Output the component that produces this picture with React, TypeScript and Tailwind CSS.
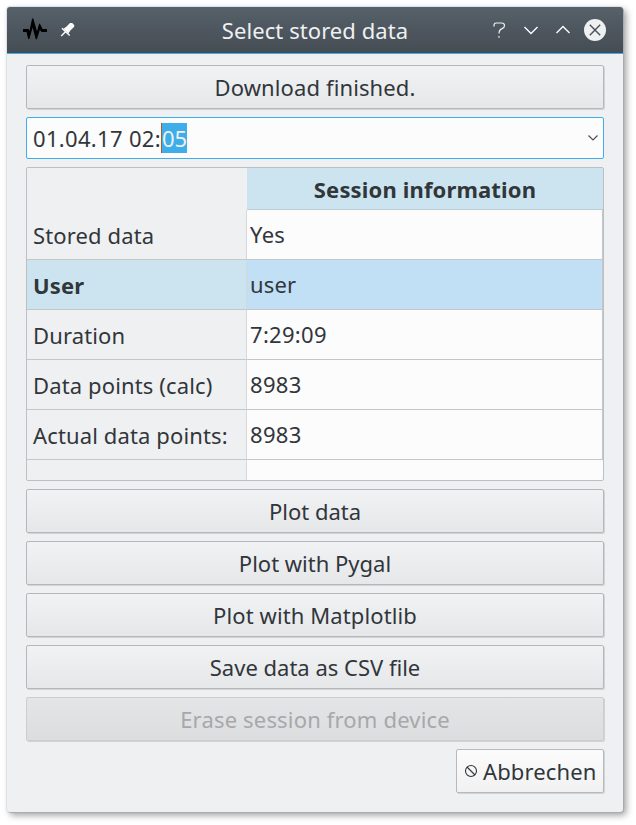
import React from "react";

const rows = [
  { label: "Stored data", value: "Yes" },
  { label: "User", value: "user", active: true },
  { label: "Duration", value: "7:29:09" },
  { label: "Data points (calc)", value: "8983" },
  { label: "Actual data points:", value: "8983" },
];

function PushButton({
  children,
  disabled,
  tracking = "",
}: {
  children: React.ReactNode;
  disabled?: boolean;
  tracking?: string;
}) {
  return (
    <button
      disabled={disabled}
      className={
        "flex h-11 w-full shrink-0 items-center justify-center rounded-[2px] border bg-linear-to-b pb-px shadow-[1px_1px_0_#d2d3d5] " +
        tracking +
        (disabled
          ? " border-[#cbcdcf] from-[#e4e5e7] to-[#dcdddf] text-[#a6a8aa]"
          : " border-[#b5b7ba] from-[#f1f2f4] to-[#e6e7e9]")
      }
    >
      {children}
    </button>
  );
}

function TitleBar() {
  return (
    <header className="flex h-[47px] shrink-0 items-center rounded-t-[3px] border-b border-[#3daee9] bg-linear-to-b from-[#566169] to-[#454c54] text-[#eff0f1]">
      <svg className="ml-4 h-6 w-6" viewBox="0 0 24 24" fill="#000">
        <path d="M0 11h5.6l.9 2L9.1.6h1.2l3.7 12.9 2.1-7.7h.8l2.7 5.2H24v3h-5.6l-1.5-2.2-3 9.4h-1.1L9.6 9.6 6.4 21H5.2L3.5 14H0z" />
      </svg>
      <svg className="ml-[10px] h-5 w-5" viewBox="0 0 20 20" fill="#fcfcfc">
        <path d="M8.6 7.4 13 3h2.2l2 2v1.8l-4.6 4.5z" />
        <path d="m9 7 4 4-1.7 2.6-4.8-4.8z" />
        <path d="m5 8.3 7.7 7.2M9 11.2 4.2 16" fill="none" stroke="#fcfcfc" strokeWidth="1.4" />
      </svg>
      <h1 className="ml-[144px] w-[188px] text-center tracking-[0.07px] whitespace-nowrap">Select stored data</h1>
      <svg className="ml-[78px] h-6 w-6" viewBox="0 0 24 24" fill="none" stroke="#eff0f1" strokeWidth="1.2">
        <path d="M7 8.6V7.2Q7 5 9.2 5h5.4q2.9 0 2.9 2.4 0 2.3-2.4 3.2Q12 11.8 12 15.6M12 18v1.7" />
      </svg>
      <svg className="ml-2 h-6 w-6" viewBox="0 0 24 24" fill="none" stroke="#fcfcfc" strokeWidth="1.4">
        <path d="m5.5 9 6.5 6.5L18.5 9" />
      </svg>
      <svg className="ml-2 h-6 w-6" viewBox="0 0 24 24" fill="none" stroke="#fcfcfc" strokeWidth="1.4">
        <path d="m5.5 15L12 8.5l6.5 6.5" />
      </svg>
      <svg className="ml-2 h-6 w-6" viewBox="0 0 24 24" fill="none" stroke="#475057" strokeWidth="1.4">
        <circle cx="12" cy="12" r="11" fill="#eff0f1" stroke="none" />
        <path d="m6.8 6.8 10.4 10.4M17.2 6.8 6.8 17.2" />
      </svg>
    </header>
  );
}

export default function App() {
  return (
    <div className="h-[825px] w-[636px] overflow-hidden bg-white p-[7px] font-['Noto_Sans',sans-serif] text-[22px] leading-[30px] text-[#31363b]">
      <div className="flex h-[805px] w-[616px] flex-col rounded-[3px] bg-[#eff0f1] shadow-[1px_1px_0_#a9acae,0_0_0_1px_#dfe1e2,3px_3px_7px_rgba(0,0,0,0.4)]">
        <TitleBar />
        <main className="flex w-[597px] flex-col gap-2 pt-[11px] pl-[19px]">
          <PushButton tracking="tracking-[0.12px]">Download finished.</PushButton>
          <div className="flex h-[42px] items-center rounded-[2px] border border-[#3daee9] bg-[#fcfcfc] pl-[6px]">
            <span className="tracking-[0.32px]">01.04.17 02:</span>
            <span className="w-[26px] border-l border-[#a85a32] bg-[#3daee9] text-[#eff0f1]">05</span>
            <svg className="mr-[4px] ml-auto h-3 w-3" viewBox="0 0 12 12" fill="none" stroke="#4d5257" strokeWidth="1.2">
              <path d="m1.5 3.5 4.5 4.5 4.5-4.5" />
            </svg>
          </div>
          <div className="flex h-[314px] flex-col overflow-hidden rounded-[2px] border border-[#bdc0c2] bg-[#fcfcfc]">
            <div className="flex h-[42px] shrink-0">
              <div className="w-[220px] bg-[#eff0f1]" />
              <div className="flex flex-1 items-center justify-center border-b border-[#bdcbd2] bg-[#cce4ef] pt-px font-bold tracking-[0.15px]">
                Session information
              </div>
            </div>
            {rows.map((row) => (
              <div key={row.label} className="flex h-[50px] shrink-0">
                <div
                  className={
                    "flex w-[220px] items-center border-r border-b border-r-[#d5d7d9] border-b-[#c4c6c8] pt-px pl-[6px] tracking-[0.13px] whitespace-nowrap " +
                    (row.active ? "bg-[#cce4ef] font-bold" : "bg-[#eff0f1]")
                  }
                >
                  {row.label}
                </div>
                <div
                  className={
                    "flex flex-1 items-center border-r border-b border-[#c4c6c8] pb-px pl-[3px] " +
                    (row.active ? "bg-[#c1dff5] tracking-[0.15px]" : "bg-[#fcfcfc] tracking-[0.3px]")
                  }
                >
                  {row.value}
                </div>
              </div>
            ))}
            <div className="w-[220px] flex-1 border-r border-[#d5d7d9] bg-[#eff0f1]" />
          </div>
          <PushButton>Plot data</PushButton>
          <PushButton>Plot with Pygal</PushButton>
          <PushButton tracking="tracking-[0.1px]">Plot with Matplotlib</PushButton>
          <PushButton>Save data as CSV file</PushButton>
          <PushButton disabled tracking="tracking-[0.17px]">Erase session from device</PushButton>
          <button className="flex h-11 w-[148px] items-center self-end rounded-[2px] border border-[#b7babc] bg-linear-to-b from-[#fcfcfc] to-[#f1f1f2] pb-px pl-[7px] tracking-[0.12px] shadow-[1px_1px_0_#d2d3d5]">
            <svg className="mr-[5px] h-[14px] w-[14px]" viewBox="0 0 14 14" fill="none" stroke="#31363b" strokeWidth="1.1">
              <circle cx="7" cy="7" r="5.5" />
              <path d="m3 3 8 8" />
            </svg>
            Abbrechen
          </button>
        </main>
      </div>
    </div>
  );
}
